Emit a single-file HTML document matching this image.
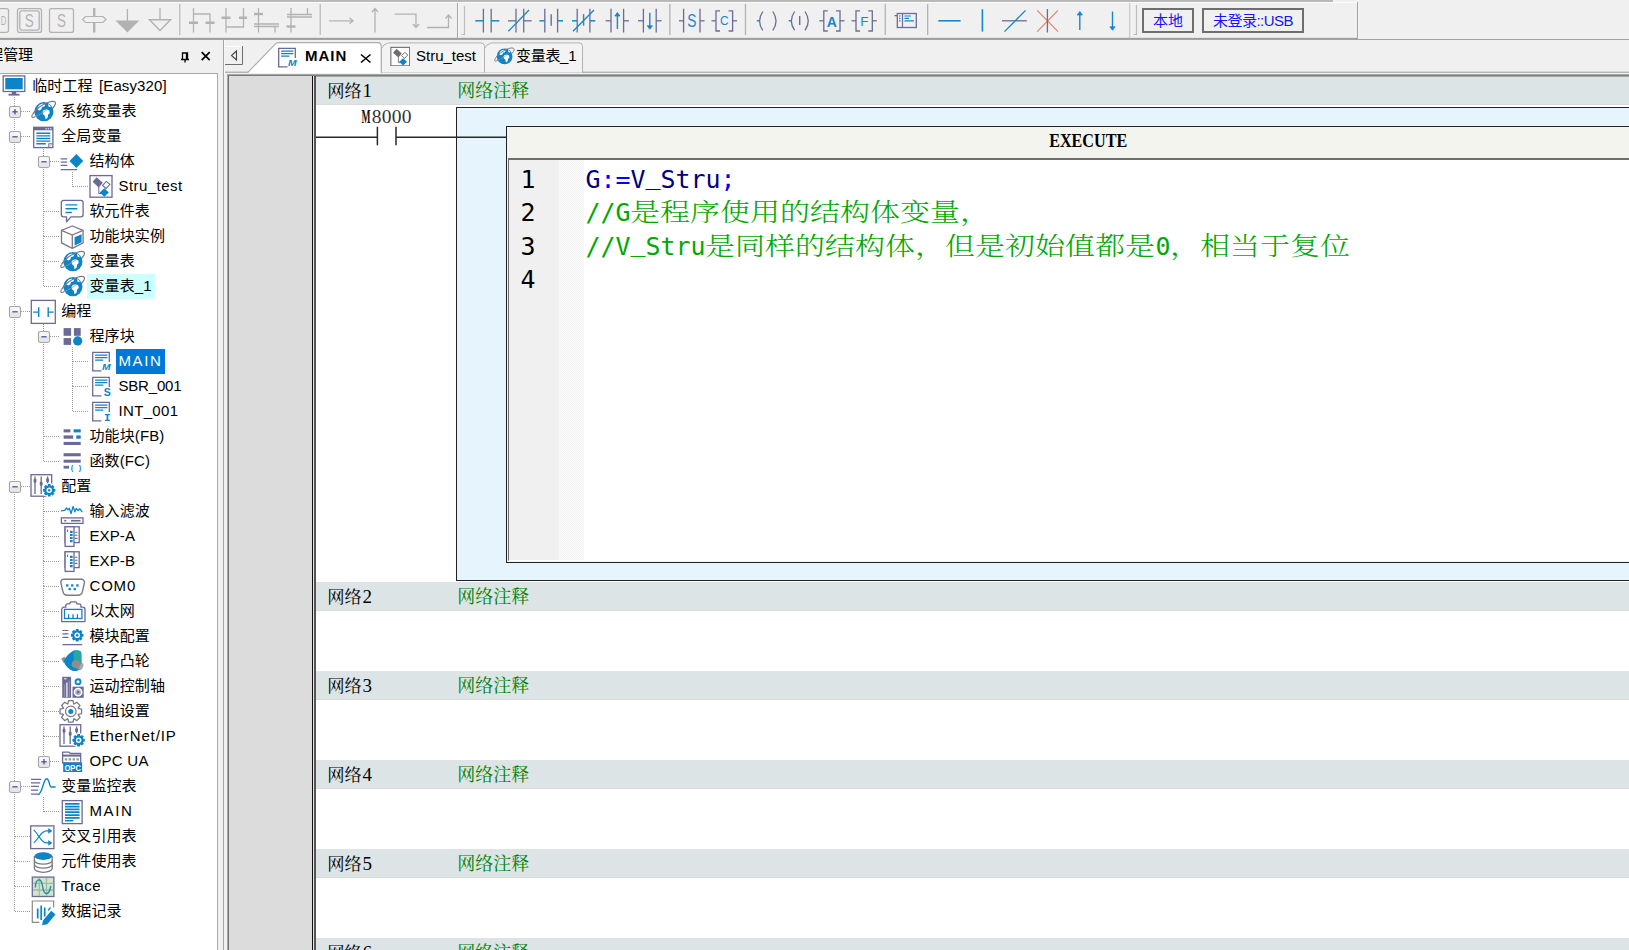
<!DOCTYPE html>
<html lang="zh-CN">
<head>
<meta charset="utf-8">
<title>MAIN</title>
<style>
html,body{margin:0;padding:0}
body{width:1629px;height:950px;position:relative;overflow:hidden;background:#f0f0f0;font-family:"Liberation Sans","Noto Sans CJK SC",sans-serif;font-size:15px;color:#000}
.abs{position:absolute}
/* toolbar */
#tb{position:absolute;left:0;top:0;width:1629px;height:40px;background:#f0f0f0}
.btn{position:absolute;top:8px;height:21px;border:2px solid #6e6e6e;box-sizing:content-box;color:#1414ff;font-size:15px;line-height:21px;text-align:center;background:#f0f0f0}
/* side */
#side{position:absolute;left:0;top:40px;width:223px;height:910px;background:#f0f0f0}
#tree{position:absolute;left:0;top:74px;width:217px;height:876px;background:#fff;border-right:1px solid #a9a9a9}
.ti{position:absolute;height:25px;line-height:24px;padding:0 3px 0 2.500px;white-space:nowrap;font-size:15px;letter-spacing:0.100px}
.ti.hot{background:#ccffff}
.ti.sel{background:#0078d7;color:#fff}
/* editor */
#ed{position:absolute;left:228px;top:75px;width:1401px;height:875px;background:#fff}
.nh{position:absolute;left:316px;width:1313px;height:29px;background:#dce4e5;border-bottom:1px solid #dadbd5;box-sizing:border-box}
.nl{position:absolute;left:327.300px;font:17.330px/29px "Noto Serif CJK SC",serif;color:#000;white-space:nowrap}
.nl{margin-top:-1px}
.nc{margin-top:-0.800px}
.nl b{font:19px/29px "Liberation Serif",serif;margin-left:0.500px}
.nc{position:absolute;left:457.300px;font:18px/29px "Noto Serif CJK SC",serif;color:#008000;white-space:nowrap}
.code{position:absolute;left:585.500px;height:34px;white-space:pre;font:24.900px/34px "DejaVu Sans Mono","Liberation Mono",monospace}
.cj{display:inline-block;font-family:"Noto Serif CJK SC",serif;font-weight:300;font-size:25px;line-height:20px;transform:scaleX(1.2);transform-origin:0 50%;vertical-align:baseline}
.us{position:relative;top:-3.800px}
.ln{position:absolute;left:520.500px;font:24.900px/34px "DejaVu Sans Mono","Liberation Mono",monospace;color:#000}
</style>
</head>
<body>
<!-- ================= TOOLBAR ================= -->
<div id="tb">
<svg class="abs" style="left:0;top:0" width="1629" height="40" viewBox="0 0 1629 40"><rect x="0" y="0" width="1333" height="2" fill="#b9b9b9"/><rect x="0" y="2" width="1358" height="1" fill="#fbfbfb"/><rect x="0" y="38" width="1358" height="1" fill="#9e9e9e"/><rect x="0" y="39" width="1629" height="1" fill="#a4a4a4"/><rect x="0" y="37" width="1357" height="1" fill="#e2e2e2"/><g fill="none" stroke="#b2b2b2" stroke-width="1.3"><path d="M-3 8.600H6.500a2 2 0 0 1 2 2V30.400a2 2 0 0 1-2 2H-3"/><rect x="17.500" y="8.600" width="24" height="23.800" rx="2"/><rect x="19.800" y="10.900" width="19.400" height="19.200" rx="2"/><rect x="49.500" y="8.600" width="24" height="23.800" rx="2"/></g><text x="0.800" y="25.300" textLength="5.600" lengthAdjust="spacingAndGlyphs" style="font:13.500px 'Liberation Sans',sans-serif;fill:#b2b2b2">D</text><text x="24.800" y="26.600" textLength="9" lengthAdjust="spacingAndGlyphs" style="font:18.500px 'Liberation Sans',sans-serif;fill:#b2b2b2">S</text><text x="57" y="27.300" textLength="9" lengthAdjust="spacingAndGlyphs" style="font:18.500px 'Liberation Sans',sans-serif;fill:#b2b2b2">S</text><path d="M94.200 8v24.500" stroke="#b2b2b2" stroke-width="2.400"/><path d="M82.500 19.500l3-3h17.500l3 3-3 3h-17.500z" fill="#f0f0f0" stroke="#b2b2b2" stroke-width="1.200"/><path d="M127.400 9v12" stroke="#b2b2b2" stroke-width="1.300"/><path d="M115.500 20.500h23.800l-11.900 12z" fill="#b2b2b2"/><path d="M160 8v12" stroke="#b2b2b2" stroke-width="1.300"/><path d="M149.500 19.800h21l-10.500 10.700z" fill="none" stroke="#b2b2b2" stroke-width="1.500"/><rect x="179" y="4" width="1.500" height="31" fill="#c2c2c2"/><g fill="none" stroke="#b2b2b2" stroke-width="1.300"><path d="M193.500 8v24.500M193.500 14h16.500v18.500"/><path d="M226 8v24.500M243.500 8v19H226"/><path d="M258.500 8v24.500M254 24h25M254 26.500h25M275 26.500v6"/><path d="M291 8v24.500M287 14.500h25M287 17h25M307.500 8v6.500"/></g><g fill="none" stroke="#b2b2b2" stroke-width="2.400"><path d="M189 22.800h9M205.500 22.800h9"/><path d="M221.500 17.700h9M239 17.700h8"/><path d="M254 14h9"/><path d="M286.500 26.500h9"/></g><rect x="319.500" y="4" width="1.500" height="31" fill="#c2c2c2"/><g fill="none" stroke="#b2b2b2" stroke-width="1.300"><path d="M329 20.800h24M349.500 17.800l3.500 3-3.500 3"/><path d="M375 32.500v-24M372 12l3-3.500 3 3.500"/><path d="M394.500 14.200h21.500v13M413 24l3 3.500 3-3.500"/><path d="M427 27.500h21.500v-12.500M445.500 18.500l3-3.500 3 3.500"/></g><rect x="457" y="3" width="1" height="35" fill="#a6a6a6"/><rect x="458" y="3" width="1" height="35" fill="#fafafa"/><path d="M464.500 6v28.500h-3" fill="none" stroke="#bdbdbd" stroke-width="1.200"/><path d="M483.4 8.8V32.4M491.2 8.8V32.4" stroke="#6c6c96" stroke-width="1.300" fill="none"/><path d="M475.3 20.8H483.4" stroke="#1488cc" stroke-width="1.5" fill="none"/><path d="M491.2 20.8H499.3" stroke="#1488cc" stroke-width="1.5" fill="none"/><path d="M516 8.8V32.4M523.7 8.8V32.4" stroke="#6c6c96" stroke-width="1.300" fill="none"/><path d="M508 20.8H516" stroke="#6c6c96" stroke-width="1.3" fill="none"/><path d="M523.7 20.8H531.7" stroke="#6c6c96" stroke-width="1.3" fill="none"/><path d="M508.300 31.300L529 10" stroke="#1488cc" stroke-width="1.300"/><path d="M544.8 8.8V32.4M557.6 8.8V32.4" stroke="#6c6c96" stroke-width="1.300" fill="none"/><path d="M539.4 20.8H544.8" stroke="#1488cc" stroke-width="1.5" fill="none"/><path d="M557.6 20.8H563" stroke="#1488cc" stroke-width="1.5" fill="none"/><path d="M551.200 14.200V25.700" stroke="#6c6c96" stroke-width="1.400"/><path d="M577.2 8.8V32.4M589.9 8.8V32.4" stroke="#6c6c96" stroke-width="1.300" fill="none"/><path d="M572 20.8H577.2" stroke="#1488cc" stroke-width="1.5" fill="none"/><path d="M589.9 20.8H595.3" stroke="#1488cc" stroke-width="1.5" fill="none"/><path d="M583.600 14.200V25.700" stroke="#6c6c96" stroke-width="1.400"/><path d="M573 31.300L594 10" stroke="#1488cc" stroke-width="1.300"/><path d="M611 8.8V32.4M623.6 8.8V32.4" stroke="#6c6c96" stroke-width="1.300" fill="none"/><path d="M605.6 20.8H611" stroke="#6c6c96" stroke-width="1.3" fill="none"/><path d="M623.6 20.8H629" stroke="#6c6c96" stroke-width="1.3" fill="none"/><path d="M617.400 29V13.500" stroke="#1488cc" stroke-width="1.400"/><path d="M614.800 16l2.600-3.500 2.600 3.500z" fill="#1488cc" stroke="#1488cc" stroke-width="0.800"/><path d="M643.4 8.8V32.4M656.2 8.8V32.4" stroke="#6c6c96" stroke-width="1.300" fill="none"/><path d="M638 20.8H643.4" stroke="#6c6c96" stroke-width="1.3" fill="none"/><path d="M656.2 20.8H661.6" stroke="#6c6c96" stroke-width="1.3" fill="none"/><path d="M649.800 12.800V28" stroke="#1488cc" stroke-width="1.400"/><path d="M647.200 25.800l2.600 3.500 2.600-3.500z" fill="#1488cc" stroke="#1488cc" stroke-width="0.800"/><rect x="669.200" y="4" width="1.300" height="31" fill="#b4b4b4"/><path d="M683.6 8.8V32.4M700 8.8V32.4" stroke="#6c6c96" stroke-width="1.300" fill="none"/><path d="M679 20.8H683.6" stroke="#6c6c96" stroke-width="1.3" fill="none"/><path d="M700 20.8H704.6" stroke="#6c6c96" stroke-width="1.3" fill="none"/><text x="687.300" y="27.200" textLength="9.200" lengthAdjust="spacingAndGlyphs" style="font:18.500px 'Liberation Sans',sans-serif;fill:#1488cc">S</text><path d="M720 10.800H716V31H720M728.6 10.800H732.6V31H728.6" fill="none" stroke="#6c6c96" stroke-width="1.300"/><path d="M711.5 20.8H716" stroke="#6c6c96" stroke-width="1.3" fill="none"/><path d="M732.6 20.8H737.1" stroke="#6c6c96" stroke-width="1.3" fill="none"/><text x="720" y="25.300" textLength="8.600" lengthAdjust="spacingAndGlyphs" style="font:12.500px 'Liberation Sans',sans-serif;fill:#1488cc">C</text><rect x="744.800" y="4" width="1.300" height="31" fill="#b4b4b4"/><path d="M762.8 11.500Q756.3 21 762.8 30.400M772.8 11.500Q779.3 21 772.8 30.400" fill="none" stroke="#6c6c96" stroke-width="1.300"/><path d="M756.8 20.8H759.8" stroke="#1488cc" stroke-width="1.4" fill="none"/><path d="M794.6 11.500Q788.1 21 794.6 30.400M805 11.500Q811.5 21 805 30.400" fill="none" stroke="#6c6c96" stroke-width="1.300"/><path d="M788.6 20.8H791.6" stroke="#1488cc" stroke-width="1.4" fill="none"/><path d="M799.700 16V25" stroke="#6c6c96" stroke-width="1.400"/><path d="M827.8 10.800H823.8V31H827.8M836 10.800H840V31H836" fill="none" stroke="#6c6c96" stroke-width="1.300"/><path d="M819.3 20.8H823.8" stroke="#6c6c96" stroke-width="1.3" fill="none"/><path d="M840 20.8H844.5" stroke="#6c6c96" stroke-width="1.3" fill="none"/><text x="831.900" y="26.500" text-anchor="middle" style="font:bold 14px 'Liberation Sans',sans-serif;fill:#1488cc">A</text><path d="M860 10.800H856V31H860M868.3 10.800H872.3V31H868.3" fill="none" stroke="#6c6c96" stroke-width="1.300"/><path d="M851.5 20.8H856" stroke="#6c6c96" stroke-width="1.3" fill="none"/><path d="M872.3 20.8H876.8" stroke="#6c6c96" stroke-width="1.3" fill="none"/><text x="864.300" y="26.300" text-anchor="middle" style="font:13.500px 'Liberation Sans',sans-serif;fill:#1488cc">F</text><rect x="884.600" y="4" width="1.300" height="31" fill="#b4b4b4"/><rect x="897.300" y="13.500" width="19" height="14" fill="none" stroke="#6c6c96" stroke-width="1.300"/><path d="M902.500 13.500v14M894.500 15.600h3" stroke="#6c6c96" stroke-width="1.200"/><path d="M904.500 16h6.500M904.500 18.300h4.500M904.500 20.800h9.500M899 16h1.500M899 18.300h1.500M899 20.800h1.500" stroke="#1488cc" stroke-width="1.200"/><rect x="927" y="4" width="1.300" height="31" fill="#b4b4b4"/><path d="M938.3 20.8H960.6" stroke="#1488cc" stroke-width="1.6" fill="none"/><path d="M982.400 9.300V31.600" stroke="#1488cc" stroke-width="1.600"/><path d="M1002 20.8H1026.8" stroke="#6c6c96" stroke-width="1.3" fill="none"/><path d="M1004.500 31.600L1025.600 10.400" stroke="#1488cc" stroke-width="1.300"/><path d="M1037.200 10.400L1058 31.600M1058 10.400L1037.200 31.600" stroke="#e0846a" stroke-width="1.200"/><path d="M1047.400 9V32.500" stroke="#6c6c96" stroke-width="1.300"/><path d="M1079.800 30V12.500" stroke="#1488cc" stroke-width="1.400"/><path d="M1077.200 15l2.600-3.500 2.600 3.500z" fill="#1488cc" stroke="#1488cc" stroke-width="0.800"/><path d="M1112.500 11.500V29" stroke="#1488cc" stroke-width="1.400"/><path d="M1109.900 26.800l2.600 3.500 2.600-3.500z" fill="#1488cc" stroke="#1488cc" stroke-width="0.800"/><rect x="1129.500" y="3" width="1" height="35" fill="#a6a6a6"/><rect x="1130.500" y="3" width="1" height="35" fill="#fafafa"/><path d="M1136.500 5v29.500h-3" fill="none" stroke="#bdbdbd" stroke-width="1.200"/><rect x="1357" y="2" width="1" height="37" fill="#a2a2a2"/><rect x="1358" y="2" width="1" height="36" fill="#f6f6f6"/></svg>
<div class="btn" style="left:1142px;width:48px">本地</div>
<div class="btn" style="left:1202px;width:98px;letter-spacing:-0.550px">未登录::USB</div>
</div>
<!-- ================= SIDE PANEL ================= -->
<div id="side"></div>
<div class="abs" style="left:223px;top:40px;width:1px;height:910px;background:#a6a6a6"></div>
<div class="abs" style="left:-11.700px;top:45.400px;font-size:15px;line-height:20px;white-space:nowrap;letter-spacing:-0.150px">程管理</div>
<svg class="abs" style="left:177px;top:48.500px" width="36" height="16" viewBox="0 0 36 16"><path d="M4 10.500h8M5.500 10v-6h5v6M9.500 4v6M8 10.500v3" stroke="#000" stroke-width="1.300" fill="none"/><path d="M24.700 3.200l8 8M32.700 3.200l-8 8" stroke="#000" stroke-width="1.700" fill="none"/></svg>
<div class="abs" style="left:0;top:73px;width:218px;height:1px;background:#a8a8a8"></div>
<div id="tree"></div>
<svg style="position:absolute;left:0;top:0" width="218" height="950"><path d="M21 111.5H31M14.5 97V107M21 136.5H31M14.5 117V132M50 161.5H60M43.5 147V157M73 186.5H89M72.5 172V187M44 211.5H60M43.5 167V212M44 236.5H60M43.5 211V237M44 261.5H60M43.5 236V262M44 286.5H60M43.5 261V287M21 311.5H31M14.5 142V307M50 336.5H60M43.5 322V332M73 361.5H89M72.5 347V362M73 386.5H89M72.5 361V387M73 411.5H89M72.5 386V412M44 436.5H60M43.5 342V437M44 461.5H60M43.5 436V462M21 486.5H31M14.5 317V482M44 511.5H60M43.5 497V512M44 536.5H60M43.5 511V537M44 561.5H60M43.5 536V562M44 586.5H60M43.5 561V587M44 611.5H60M43.5 586V612M44 636.5H60M43.5 611V637M44 661.5H60M43.5 636V662M44 686.5H60M43.5 661V687M44 711.5H60M43.5 686V712M44 736.5H60M43.5 711V737M50 761.5H60M43.5 736V757M21 786.5H31M14.5 492V782M44 811.5H60M43.5 797V812M15 836.5H31M14.5 792V837M15 861.5H31M14.5 836V862M15 886.5H31M14.5 861V887M15 911.5H31M14.5 886V912" stroke="#9a9a9a" stroke-width="1" stroke-dasharray="1 1" fill="none"/></svg>
<svg style="position:absolute;left:2.2px;top:74px;overflow:visible" width="24" height="24" viewBox="0 0 24 24"><rect x="1.200" y="1.900" width="21.600" height="15.600" fill="#fff" stroke="#6a6a94" stroke-width="1.300"/><rect x="3.300" y="4" width="17.400" height="11.300" fill="#0b84c8"/><rect x="9.800" y="18" width="4.400" height="2.200" fill="#6a6a94"/><rect x="6.500" y="19.800" width="11" height="1.800" fill="#6a6a94"/></svg>
<div class="ti" style="left:29.70px;top:74px">临时工程<span style="letter-spacing:0.100px;margin-left:2.200px"> [Easy320]</span></div>
<svg style="position:absolute;left:8.8px;top:106px;overflow:visible" width="12" height="12" viewBox="0 0 12 12"><rect x="0.500" y="0.500" width="11" height="10.800" rx="1.800" fill="#f6f6f6" stroke="#a6a6a6" stroke-width="1.200"/><rect x="1.300" y="6" width="9.400" height="4.500" fill="#e6e6e6"/><path d="M3.300 5.800h5.400" stroke="#3c4a9c" stroke-width="1.200"/><path d="M6 3.100v5.400" stroke="#3c4a9c" stroke-width="1.200"/></svg>
<svg style="position:absolute;left:31px;top:99px;overflow:visible" width="24" height="24" viewBox="0 0 24 24"><path d="M4.500 17.500C1 19.300 -0.200 18.200 1.500 15.500" fill="none" stroke="#7a7a86" stroke-width="1.200"/><circle cx="12.900" cy="12.700" r="9.600" fill="#0b84c8"/><path d="M6.500 8.500l2-2.800 3.200-1.200 2.500 1.200-.8 1.800-2.400.5-.6 2.200-2.200 1.200-1.500-.6zM12.500 11.200l3-.9 2.800 1.300.5 2.300-1.600 1.600-.6 3.200-2 1.500-.8-3.400-1.800-1.600-.4-2.400zM17 5l2.200 1.200.6 2-2.300-.8z" fill="#fff"/><path d="M1.500 15.500C4 11 10.500 5.500 17.500 3.200C22.500 1.600 25.500 2.400 24.200 5.600C23.400 7.600 21.500 9.500 21.500 9.500" fill="none" stroke="#7a7a86" stroke-width="1.200"/><path d="M4.500 17.500C8.500 15.800 13 13 17 10" fill="none" stroke="#9a9aa6" stroke-width="1" opacity="0.800"/></svg>
<div class="ti" style="left:58.7px;top:99px">系统变量表</div>
<svg style="position:absolute;left:8.8px;top:131px;overflow:visible" width="12" height="12" viewBox="0 0 12 12"><rect x="0.500" y="0.500" width="11" height="10.800" rx="1.800" fill="#f6f6f6" stroke="#a6a6a6" stroke-width="1.200"/><rect x="1.300" y="6" width="9.400" height="4.500" fill="#e6e6e6"/><path d="M3.300 5.800h5.400" stroke="#3c4a9c" stroke-width="1.200"/></svg>
<svg style="position:absolute;left:31px;top:124px;overflow:visible" width="24" height="24" viewBox="0 0 24 24"><rect x="2.700" y="3.300" width="19.200" height="20.300" fill="#fff" stroke="#6a6a94" stroke-width="1.300"/><rect x="2.700" y="3.300" width="19.200" height="3" fill="#6a6a94"/><path d="M14.500 4.800h1.300M16.800 4.800h1.300M19.100 4.800h1.300" stroke="#fff" stroke-width="1"/><path d="M5.300 9.300h14M5.300 11.900h14M5.300 14.500h14M5.300 17.100h14M5.300 19.700h9.500" stroke="#0b84c8" stroke-width="1.400"/><path d="M17.300 23.600v-4.300h4.600z" fill="#6a6a94"/><path d="M18.300 22.300v-2h2.200z" fill="#fff"/></svg>
<div class="ti" style="left:58.7px;top:124px">全局变量</div>
<svg style="position:absolute;left:37.8px;top:156px;overflow:visible" width="12" height="12" viewBox="0 0 12 12"><rect x="0.500" y="0.500" width="11" height="10.800" rx="1.800" fill="#f6f6f6" stroke="#a6a6a6" stroke-width="1.200"/><rect x="1.300" y="6" width="9.400" height="4.500" fill="#e6e6e6"/><path d="M3.300 5.800h5.400" stroke="#3c4a9c" stroke-width="1.200"/></svg>
<svg style="position:absolute;left:59.5px;top:149px;overflow:visible" width="24" height="24" viewBox="0 0 24 24"><path d="M0.700 9.900h6.600M0.700 13.100h6.600M0.700 16.300h6.600M0.700 20.600h16.400" stroke="#6a6a94" stroke-width="1.300"/><path d="M16.400 5.100l6.900 6.900-6.900 6.900-6.900-6.900z" fill="#0b84c8"/></svg>
<div class="ti" style="left:87px;top:149px">结构体</div>
<svg style="position:absolute;left:88.5px;top:174px;overflow:visible" width="24" height="24" viewBox="0 0 24 24"><rect x="1" y="1.600" width="22" height="21.600" fill="#fff" stroke="#6a6a94" stroke-width="1.300"/><path d="M7.600 3.200l6.200 5.600-4 4.600-6.200-5.600z" fill="#6a6a94"/><path d="M17.300 7.400l3.600 3-3.800 4-3.600-3z" fill="#fff" stroke="#6a6a94" stroke-width="1.100"/><path d="M9.800 13v6.500h2.500" fill="none" stroke="#6a6a94" stroke-width="1"/><path d="M15.300 14.300l4.600 4.200-4.600 4.200-4.600-4.200z" fill="#0b84c8"/></svg>
<div class="ti" style="left:116px;top:174px"><span style="letter-spacing:0.45px">Stru_test</span></div>
<svg style="position:absolute;left:59.5px;top:199px;overflow:visible" width="24" height="24" viewBox="0 0 24 24"><path d="M3.600 1.300h17.200a2.300 2.300 0 0 1 2.300 2.300v12a2.300 2.300 0 0 1-2.300 2.300h-9.800l-4.500 4.800v-4.800h-2.900a2.300 2.300 0 0 1-2.300-2.300v-12a2.300 2.300 0 0 1 2.300-2.300z" fill="#fff" stroke="#6a6a94" stroke-width="1.300" stroke-linejoin="round"/><path d="M5.500 5.900h11.800M5.500 9.700h11.800M5.500 13.500h6.300" stroke="#0b84c8" stroke-width="1.400"/></svg>
<div class="ti" style="left:87px;top:199px">软元件表</div>
<svg style="position:absolute;left:59.5px;top:224px;overflow:visible" width="24" height="24" viewBox="0 0 24 24"><path d="M12.300 2l10.800 4.300v12.600l-10.800 5.400-10.800-5.400v-12.600z" fill="#fff" stroke="#7a7a86" stroke-width="1.300" stroke-linejoin="round"/><path d="M1.500 6.300l10.800 4.800 10.800-4.800M12.300 11.100v13" fill="none" stroke="#7a7a86" stroke-width="1.300"/><path d="M14.600 13.200l7-3v8l-7 3.300z" fill="#0b84c8"/></svg>
<div class="ti" style="left:87px;top:224px">功能块实例</div>
<svg style="position:absolute;left:59.5px;top:249px;overflow:visible" width="24" height="24" viewBox="0 0 24 24"><path d="M4.500 17.500C1 19.300 -0.200 18.200 1.500 15.500" fill="none" stroke="#7a7a86" stroke-width="1.200"/><circle cx="12.900" cy="12.700" r="9.600" fill="#0b84c8"/><path d="M6.500 8.500l2-2.800 3.200-1.200 2.500 1.200-.8 1.800-2.400.5-.6 2.200-2.200 1.200-1.500-.6zM12.500 11.200l3-.9 2.800 1.300.5 2.300-1.600 1.600-.6 3.200-2 1.500-.8-3.400-1.800-1.600-.4-2.400zM17 5l2.200 1.200.6 2-2.300-.8z" fill="#fff"/><path d="M1.500 15.500C4 11 10.500 5.500 17.500 3.200C22.500 1.600 25.500 2.400 24.200 5.600C23.400 7.600 21.500 9.500 21.500 9.500" fill="none" stroke="#7a7a86" stroke-width="1.200"/><path d="M4.500 17.500C8.500 15.800 13 13 17 10" fill="none" stroke="#9a9aa6" stroke-width="1" opacity="0.800"/></svg>
<div class="ti" style="left:87px;top:249px">变量表</div>
<svg style="position:absolute;left:59.5px;top:274px;overflow:visible" width="24" height="24" viewBox="0 0 24 24"><path d="M4.500 17.500C1 19.300 -0.200 18.200 1.500 15.500" fill="none" stroke="#7a7a86" stroke-width="1.200"/><circle cx="12.900" cy="12.700" r="9.600" fill="#0b84c8"/><path d="M6.500 8.500l2-2.800 3.200-1.200 2.500 1.200-.8 1.800-2.400.5-.6 2.200-2.200 1.200-1.500-.6zM12.500 11.200l3-.9 2.800 1.300.5 2.300-1.600 1.600-.6 3.200-2 1.500-.8-3.400-1.800-1.600-.4-2.400zM17 5l2.200 1.200.6 2-2.300-.8z" fill="#fff"/><path d="M1.500 15.500C4 11 10.500 5.500 17.500 3.200C22.500 1.600 25.500 2.400 24.200 5.600C23.400 7.600 21.500 9.500 21.500 9.500" fill="none" stroke="#7a7a86" stroke-width="1.200"/><path d="M4.500 17.500C8.500 15.800 13 13 17 10" fill="none" stroke="#9a9aa6" stroke-width="1" opacity="0.800"/></svg>
<div class="ti hot" style="left:87px;top:274px">变量表_1</div>
<svg style="position:absolute;left:8.8px;top:306px;overflow:visible" width="12" height="12" viewBox="0 0 12 12"><rect x="0.500" y="0.500" width="11" height="10.800" rx="1.800" fill="#f6f6f6" stroke="#a6a6a6" stroke-width="1.200"/><rect x="1.300" y="6" width="9.400" height="4.500" fill="#e6e6e6"/><path d="M3.300 5.800h5.400" stroke="#3c4a9c" stroke-width="1.200"/></svg>
<svg style="position:absolute;left:31px;top:299px;overflow:visible" width="24" height="24" viewBox="0 0 24 24"><rect x="0.300" y="1.400" width="24" height="23" fill="#fff" stroke="#6a6a94" stroke-width="1.300"/><path d="M2.200 13.100h5.500M17.200 13.100h5.500M7.700 8.300v9.700M17.200 8.300v9.700" stroke="#0b84c8" stroke-width="1.400" fill="none"/></svg>
<div class="ti" style="left:58.7px;top:299px">编程</div>
<svg style="position:absolute;left:37.8px;top:331px;overflow:visible" width="12" height="12" viewBox="0 0 12 12"><rect x="0.500" y="0.500" width="11" height="10.800" rx="1.800" fill="#f6f6f6" stroke="#a6a6a6" stroke-width="1.200"/><rect x="1.300" y="6" width="9.400" height="4.500" fill="#e6e6e6"/><path d="M3.300 5.800h5.400" stroke="#3c4a9c" stroke-width="1.200"/></svg>
<svg style="position:absolute;left:59.5px;top:324px;overflow:visible" width="24" height="24" viewBox="0 0 24 24"><rect x="3.600" y="4.100" width="7.500" height="7.700" fill="#6a6a94"/><rect x="13.900" y="4.100" width="6.800" height="7.700" fill="#6a6a94"/><rect x="3.600" y="14.100" width="7.500" height="6.800" fill="#6a6a94"/><circle cx="17.700" cy="16.900" r="4.600" fill="#0b84c8"/></svg>
<div class="ti" style="left:87px;top:324px">程序块</div>
<svg style="position:absolute;left:88.5px;top:349px;overflow:visible" width="24" height="24" viewBox="0 0 24 24"><path d="M20.300 13v-9.700h-16.600v18.500h8.800" fill="#fff" stroke="#6a6a94" stroke-width="1.300"/><path d="M6.100 6.200h12.300M6.100 8.700h12.300M6.100 11.100h8.200" stroke="#0b84c8" stroke-width="1.300"/><text x="13" y="21.400" textLength="8.600" lengthAdjust="spacingAndGlyphs" style="font:italic bold 9.500px 'Liberation Sans',sans-serif;fill:#0b84c8">M</text></svg>
<div class="ti sel" style="left:116px;top:349px"><span style="letter-spacing:1.6px">MAIN</span></div>
<svg style="position:absolute;left:88.5px;top:374px;overflow:visible" width="24" height="24" viewBox="0 0 24 24"><path d="M20.300 13v-9.700h-16.600v18.500h8.800" fill="#fff" stroke="#6a6a94" stroke-width="1.300"/><path d="M6.100 6.200h12.300M6.100 8.700h12.300M6.100 11.100h8.200" stroke="#0b84c8" stroke-width="1.300"/><text x="14.800" y="21.800" style="font:bold 10.500px 'Liberation Sans',sans-serif;fill:#0b84c8">S</text></svg>
<div class="ti" style="left:116px;top:374px"><span style="letter-spacing:-0.2px">SBR_001</span></div>
<svg style="position:absolute;left:88.5px;top:399px;overflow:visible" width="24" height="24" viewBox="0 0 24 24"><path d="M20.300 13v-9.700h-16.600v18.500h8.800" fill="#fff" stroke="#6a6a94" stroke-width="1.300"/><path d="M6.100 6.200h12.300M6.100 8.700h12.300M6.100 11.100h8.200" stroke="#0b84c8" stroke-width="1.300"/><text x="15" y="21.800" style="font:bold 11px 'Liberation Mono',monospace;fill:#0b84c8">I</text></svg>
<div class="ti" style="left:116px;top:399px"><span style="letter-spacing:0.33px">INT_001</span></div>
<svg style="position:absolute;left:59.5px;top:424px;overflow:visible" width="24" height="24" viewBox="0 0 24 24"><rect x="3.600" y="5.300" width="6.800" height="3.100" fill="#6a6a94"/><rect x="13.600" y="5.300" width="7.100" height="3.100" fill="#0b84c8"/><rect x="3.600" y="11.400" width="9.600" height="3.300" fill="#6a6a94"/><rect x="16.300" y="11.400" width="4.400" height="3.300" fill="#0b84c8"/><rect x="3.600" y="17.900" width="17.100" height="3.100" fill="#6a6a94"/></svg>
<div class="ti" style="left:87px;top:424px">功能块(FB)</div>
<svg style="position:absolute;left:59.5px;top:449px;overflow:visible" width="24" height="24" viewBox="0 0 24 24"><rect x="3.600" y="4.200" width="17.100" height="3.100" fill="#6a6a94"/><rect x="3.600" y="10.700" width="17.100" height="3" fill="#6a6a94"/><rect x="3.600" y="16.800" width="5.500" height="2.800" fill="#6a6a94"/><text x="10.800" y="21" textLength="10.400" lengthAdjust="spacing" style="font:bold 7.500px 'Liberation Sans',sans-serif;fill:#0b84c8">( )</text></svg>
<div class="ti" style="left:87px;top:449px">函数(FC)</div>
<svg style="position:absolute;left:8.8px;top:481px;overflow:visible" width="12" height="12" viewBox="0 0 12 12"><rect x="0.500" y="0.500" width="11" height="10.800" rx="1.800" fill="#f6f6f6" stroke="#a6a6a6" stroke-width="1.200"/><rect x="1.300" y="6" width="9.400" height="4.500" fill="#e6e6e6"/><path d="M3.300 5.800h5.400" stroke="#3c4a9c" stroke-width="1.200"/></svg>
<svg style="position:absolute;left:31px;top:474px;overflow:visible" width="24" height="24" viewBox="0 0 24 24"><rect x="0" y="0.700" width="20.700" height="21.500" fill="#fff" stroke="#6a6a94" stroke-width="1.300"/><path d="M4 2.500v17.500M10.200 2.500v17.500M16.600 2.500v9" stroke="#6a6a94" stroke-width="1.300"/><rect x="2.600" y="4.800" width="2.800" height="4" rx="1" fill="#6a6a94"/><rect x="8.800" y="7.800" width="2.800" height="4" rx="1" fill="#6a6a94"/><rect x="15.200" y="4.300" width="2.800" height="4" rx="1" fill="#6a6a94"/><circle cx="18.2" cy="16.2" r="7.200" fill="#fff"/><path d="M22.48 14.52L24.38 14.97L24.38 17.43L22.48 17.88L22.41 18.04L23.44 19.70L21.70 21.44L20.04 20.41L19.88 20.48L19.43 22.38L16.97 22.38L16.52 20.48L16.36 20.41L14.70 21.44L12.96 19.70L13.99 18.04L13.92 17.88L12.02 17.43L12.02 14.97L13.92 14.52L13.99 14.36L12.96 12.70L14.70 10.96L16.36 11.99L16.52 11.92L16.97 10.02L19.43 10.02L19.88 11.92L20.04 11.99L21.70 10.96L23.44 12.70L22.41 14.36z" fill="#0b84c8"/><circle cx="18.2" cy="16.2" r="2.700" fill="#fff"/><circle cx="18.2" cy="16.2" r="1.200" fill="#0b84c8"/></svg>
<div class="ti" style="left:58.7px;top:474px">配置</div>
<svg style="position:absolute;left:59.5px;top:499px;overflow:visible" width="24" height="24" viewBox="0 0 24 24"><path d="M0.900 11.800l3.800-.5 1.800-2.300 1.500 1.800 1.300-1.300 1.800 5 2-7 1.800 5.300 1.500-3.500 1.800 2.200 1.700-1.700 2.400 3.300" fill="none" stroke="#0b84c8" stroke-width="1.300" stroke-linejoin="round"/><rect x="1.400" y="18.900" width="21.600" height="5.500" fill="#fff" stroke="#6a6a94" stroke-width="1.300"/><rect x="4.300" y="20.900" width="2" height="1.600" fill="#6a6a94"/><rect x="11" y="20.900" width="9.500" height="1.600" fill="#6a6a94"/></svg>
<div class="ti" style="left:87px;top:499px">输入滤波</div>
<svg style="position:absolute;left:59.5px;top:524px;overflow:visible" width="24" height="24" viewBox="0 0 24 24"><rect x="5.100" y="2.800" width="14.100" height="15.800" fill="#fff" stroke="#6a6a94" stroke-width="1.300"/><rect x="5.100" y="2.800" width="8.900" height="19.600" fill="#fff" stroke="#6a6a94" stroke-width="1.300"/><path d="M11.300 6.800v12" stroke="#0b84c8" stroke-width="2.700" stroke-dasharray="2.100 1"/><path d="M14.700 8.300h2.800M14.700 11.300h2.800M14.700 14.400h2.800" stroke="#6a6a94" stroke-width="1.100"/><path d="M7.500 5.500v2.500" stroke="#6a6a94" stroke-width="1"/></svg>
<div class="ti" style="left:87px;top:524px">EXP-A</div>
<svg style="position:absolute;left:59.5px;top:549px;overflow:visible" width="24" height="24" viewBox="0 0 24 24"><rect x="5.100" y="2.800" width="14.100" height="15.800" fill="#fff" stroke="#6a6a94" stroke-width="1.300"/><rect x="5.100" y="2.800" width="8.900" height="19.600" fill="#fff" stroke="#6a6a94" stroke-width="1.300"/><path d="M11.300 6.800v12" stroke="#0b84c8" stroke-width="2.700" stroke-dasharray="2.100 1"/><path d="M14.700 8.300h2.800M14.700 11.300h2.800M14.700 14.400h2.800" stroke="#6a6a94" stroke-width="1.100"/><path d="M7.500 5.500v2.500" stroke="#6a6a94" stroke-width="1"/></svg>
<div class="ti" style="left:87px;top:549px">EXP-B</div>
<svg style="position:absolute;left:59.5px;top:574px;overflow:visible" width="24" height="24" viewBox="0 0 24 24"><path d="M3.800 5.200h17.700a3 3 0 0 1 2.900 3.700l-2 8.800a4.500 4.500 0 0 1-4.400 3.600h-10.700a4.500 4.500 0 0 1-4.400-3.600l-2-8.800a3 3 0 0 1 2.900-3.700z" fill="#fff" stroke="#7a7a86" stroke-width="1.400"/><g fill="#0b84c8"><rect x="6.100" y="10.300" width="2.300" height="2.300"/><rect x="11.100" y="10.300" width="2.300" height="2.300"/><rect x="16.300" y="10.300" width="2.300" height="2.300"/><rect x="8.500" y="13.900" width="2.300" height="2.300"/><rect x="13.600" y="13.900" width="2.300" height="2.300"/></g></svg>
<div class="ti" style="left:87px;top:574px"><span style="letter-spacing:0.8px">COM0</span></div>
<svg style="position:absolute;left:59.5px;top:599px;overflow:visible" width="24" height="24" viewBox="0 0 24 24"><path d="M1.700 22.600v-12.200a2.200 2.200 0 0 1 2.200-2.200h1.900v-1.700a1.700 1.700 0 0 1 1.700-1.700h2.400v-0.600a1.400 1.400 0 0 1 1.400-1.400h4.100a1.400 1.400 0 0 1 1.400 1.400v0.600h2.400a1.700 1.700 0 0 1 1.700 1.700v1.700h1.900a2.200 2.200 0 0 1 2.200 2.200v12.200z" fill="#fff" stroke="#6a6a94" stroke-width="1.300" stroke-linejoin="round"/><rect x="4.500" y="10.400" width="17.400" height="9.100" fill="#fff" stroke="#0b84c8" stroke-width="1.300"/><path d="M8.600 19.500v-4.300M13 19.500v-4.300M17.400 19.500v-4.300" stroke="#0b84c8" stroke-width="1.300"/></svg>
<div class="ti" style="left:87px;top:599px">以太网</div>
<svg style="position:absolute;left:59.5px;top:624px;overflow:visible" width="24" height="24" viewBox="0 0 24 24"><path d="M2.400 6.500h6.100M2.400 9.900h6.100M2.400 13.300h6.100M2.400 20.600h19.800" stroke="#6a6a94" stroke-width="1.200"/><path d="M21.58 9.59L23.48 10.05L23.48 12.55L21.58 13.01L21.51 13.18L22.52 14.86L20.76 16.62L19.08 15.61L18.91 15.68L18.45 17.58L15.95 17.58L15.49 15.68L15.32 15.61L13.64 16.62L11.88 14.86L12.89 13.18L12.82 13.01L10.92 12.55L10.92 10.05L12.82 9.59L12.89 9.42L11.88 7.74L13.64 5.98L15.32 6.99L15.49 6.92L15.95 5.02L18.45 5.02L18.91 6.92L19.08 6.99L20.76 5.98L22.52 7.74L21.51 9.42z" fill="#0b84c8"/><circle cx="17.200" cy="11.300" r="2.800" fill="#fff"/><circle cx="17.200" cy="11.300" r="1.300" fill="#0b84c8"/></svg>
<div class="ti" style="left:87px;top:624px">模块配置</div>
<svg style="position:absolute;left:59.5px;top:649px;overflow:visible" width="24" height="24" viewBox="0 0 24 24"><path d="M1.200 9.500l3.300-1.800 2.400 4.400-3.300 1.800z" fill="#8e8e8e"/><path d="M14.500 1.500C17.500 1 20.500 2 21.300 3.500L21.500 17C21 20.500 17.500 22.600 13.500 22C9.500 21.400 4.200 15.500 4 12.500C3.800 9.500 10.500 2.300 14.500 1.500z" fill="#0b84c8"/><path d="M14.500 1.500C17.500 1 20.500 2 21.300 3.500L21.500 15C19.500 12.500 17 12 14.800 12.800C13 9 13.200 4.500 14.500 1.500z" fill="#2aa7a4"/><rect x="11.500" y="12" width="11" height="7.600" rx="3.500" transform="rotate(22 17 15.800)" fill="#8e8e8e"/><ellipse cx="21.300" cy="17.700" rx="1.800" ry="3.600" transform="rotate(22 21.300 17.700)" fill="#a8a8a8"/></svg>
<div class="ti" style="left:87px;top:649px">电子凸轮</div>
<svg style="position:absolute;left:59.5px;top:674px;overflow:visible" width="24" height="24" viewBox="0 0 24 24"><rect x="2.200" y="2.800" width="8.900" height="21" fill="#6a6a94"/><path d="M6.900 8.500v14.800" stroke="#fff" stroke-width="1.200"/><path d="M4.300 10.500v12.800M9.300 6.500v16.800" stroke="#9a9ab8" stroke-width="0.900"/><path d="M4 4.800h2.500" stroke="#fff" stroke-width="1"/><rect x="12.500" y="12.700" width="11.200" height="11.100" fill="#6a6a94"/><circle cx="18.100" cy="18.200" r="3.700" fill="#b9b9c4" stroke="#fff" stroke-width="1.400"/><circle cx="18.100" cy="18.200" r="1.400" fill="#6a6a94"/><circle cx="18" cy="7.800" r="2.500" fill="#fff" stroke="#0b84c8" stroke-width="1.900"/></svg>
<div class="ti" style="left:87px;top:674px">运动控制轴</div>
<svg style="position:absolute;left:59.5px;top:699px;overflow:visible" width="24" height="24" viewBox="0 0 24 24"><path d="M18.25 9.48L21.57 10.17L21.57 14.63L18.25 15.32L18.13 15.61L19.99 18.44L16.84 21.59L14.01 19.73L13.72 19.85L13.03 23.17L8.57 23.17L7.88 19.85L7.59 19.73L4.76 21.59L1.61 18.44L3.47 15.61L3.35 15.32L0.03 14.63L0.03 10.17L3.35 9.48L3.47 9.19L1.61 6.36L4.76 3.21L7.59 5.07L7.88 4.95L8.57 1.63L13.03 1.63L13.72 4.95L14.01 5.07L16.84 3.21L19.99 6.36L18.13 9.19z" fill="#fff" stroke="#7a7a86" stroke-width="1.300" stroke-linejoin="round"/><circle cx="10.800" cy="12.400" r="5.300" fill="#fff" stroke="#7a7a86" stroke-width="1.200"/><circle cx="10.800" cy="12.400" r="2.500" fill="#0b84c8"/></svg>
<div class="ti" style="left:87px;top:699px">轴组设置</div>
<svg style="position:absolute;left:59.5px;top:724px;overflow:visible" width="24" height="24" viewBox="0 0 24 24"><rect x="0" y="0.700" width="20.700" height="21.500" fill="#fff" stroke="#6a6a94" stroke-width="1.300"/><path d="M4 2.500v17.500M10.200 2.500v17.500M16.600 2.500v9" stroke="#6a6a94" stroke-width="1.300"/><rect x="2.600" y="4.800" width="2.800" height="4" rx="1" fill="#6a6a94"/><rect x="8.800" y="7.800" width="2.800" height="4" rx="1" fill="#6a6a94"/><rect x="15.200" y="4.300" width="2.800" height="4" rx="1" fill="#6a6a94"/><circle cx="18.6" cy="16.2" r="7.200" fill="#fff"/><path d="M22.88 14.52L24.78 14.97L24.78 17.43L22.88 17.88L22.81 18.04L23.84 19.70L22.10 21.44L20.44 20.41L20.28 20.48L19.83 22.38L17.37 22.38L16.92 20.48L16.76 20.41L15.10 21.44L13.36 19.70L14.39 18.04L14.32 17.88L12.42 17.43L12.42 14.97L14.32 14.52L14.39 14.36L13.36 12.70L15.10 10.96L16.76 11.99L16.92 11.92L17.37 10.02L19.83 10.02L20.28 11.92L20.44 11.99L22.10 10.96L23.84 12.70L22.81 14.36z" fill="#0b84c8"/><circle cx="18.6" cy="16.2" r="2.700" fill="#fff"/><circle cx="18.6" cy="16.2" r="1.200" fill="#0b84c8"/></svg>
<div class="ti" style="left:87px;top:724px"><span style="letter-spacing:0.87px">EtherNet/IP</span></div>
<svg style="position:absolute;left:37.8px;top:756px;overflow:visible" width="12" height="12" viewBox="0 0 12 12"><rect x="0.500" y="0.500" width="11" height="10.800" rx="1.800" fill="#f6f6f6" stroke="#a6a6a6" stroke-width="1.200"/><rect x="1.300" y="6" width="9.400" height="4.500" fill="#e6e6e6"/><path d="M3.300 5.800h5.400" stroke="#3c4a9c" stroke-width="1.200"/><path d="M6 3.100v5.400" stroke="#3c4a9c" stroke-width="1.200"/></svg>
<svg style="position:absolute;left:59.5px;top:749px;overflow:visible" width="24" height="24" viewBox="0 0 24 24"><path d="M2.600 14v-10.900h6.500l1.200 1.400h10.400v9.500z" fill="#fff" stroke="#6a6a94" stroke-width="1.300" stroke-linejoin="round"/><rect x="2.600" y="5.600" width="18.100" height="2" fill="#6a6a94"/><path d="M4.800 10.300h2.400M8.700 10.300h2.400M12.600 10.300h2.400M16.500 10.300h2.400" stroke="#8aa08a" stroke-width="2.200"/><rect x="3.200" y="13.600" width="18.900" height="9.400" fill="#0b84c8"/><text x="12.650" y="21.600" text-anchor="middle" textLength="16.500" lengthAdjust="spacingAndGlyphs" style="font:bold 9.500px 'Liberation Sans',sans-serif;fill:#fff">OPC</text></svg>
<div class="ti" style="left:87px;top:749px"><span style="letter-spacing:0.3px">OPC UA</span></div>
<svg style="position:absolute;left:8.8px;top:781px;overflow:visible" width="12" height="12" viewBox="0 0 12 12"><rect x="0.500" y="0.500" width="11" height="10.800" rx="1.800" fill="#f6f6f6" stroke="#a6a6a6" stroke-width="1.200"/><rect x="1.300" y="6" width="9.400" height="4.500" fill="#e6e6e6"/><path d="M3.300 5.800h5.400" stroke="#3c4a9c" stroke-width="1.200"/></svg>
<svg style="position:absolute;left:31px;top:774px;overflow:visible" width="24" height="24" viewBox="0 0 24 24"><path d="M0 5.400h10.200M0 8.900h9.200M0 12.400h8M0 16.100h7M0 20.200h7" stroke="#6a6a94" stroke-width="1.200"/><path d="M6.800 20.600C11.500 20.600 12.300 4.700 15.500 4.700S18 13 20.300 13H24.600" fill="none" stroke="#0b84c8" stroke-width="1.400"/></svg>
<div class="ti" style="left:58.7px;top:774px">变量监控表</div>
<svg style="position:absolute;left:59.5px;top:799px;overflow:visible" width="24" height="24" viewBox="0 0 24 24"><rect x="2.300" y="1.600" width="19.800" height="23" fill="#fff" stroke="#6a6a94" stroke-width="1.300"/><path d="M5 4.900h14.600M5 7.600h14.600M5 10.400h14.600M5 13.200h14.600M5 16.100h14.600M5 18.900h14.600" stroke="#0b84c8" stroke-width="1.700"/><path d="M5 21.700h8.200" stroke="#0b84c8" stroke-width="1.500"/></svg>
<div class="ti" style="left:87px;top:799px"><span style="letter-spacing:1.6px">MAIN</span></div>
<svg style="position:absolute;left:31px;top:824px;overflow:visible" width="24" height="24" viewBox="0 0 24 24"><rect x="-0.300" y="1.900" width="23.200" height="22.700" fill="#fff" stroke="#6a6a94" stroke-width="1.300"/><path d="M2.700 5.900C8 10.500 10 18.900 15.500 18.900H19M2.700 18.900C8 14.500 10 6.900 15.500 6.900H19" fill="none" stroke="#0b84c8" stroke-width="1.200"/><path d="M17.300 4l4 2.900-4 2.900zM17.300 16l4 2.900-4 2.900z" fill="#0b84c8"/></svg>
<div class="ti" style="left:58.7px;top:824px">交叉引用表</div>
<svg style="position:absolute;left:31px;top:849px;overflow:visible" width="24" height="24" viewBox="0 0 24 24"><path d="M3.400 7.100v12.400c0 2.100 4 3.800 8.900 3.800s8.900-1.700 8.900-3.800v-12.400" fill="#fff" stroke="#7a7a86" stroke-width="1.300"/><path d="M3.400 11.400c0 2.100 4 3.700 8.900 3.700s8.900-1.600 8.900-3.700M3.400 15.500c0 2.100 4 3.700 8.900 3.700s8.900-1.600 8.900-3.700" fill="none" stroke="#7a7a86" stroke-width="1.300"/><ellipse cx="12.300" cy="7.100" rx="8.900" ry="3.800" fill="#0b84c8"/></svg>
<div class="ti" style="left:58.7px;top:849px">元件使用表</div>
<svg style="position:absolute;left:31px;top:874px;overflow:visible" width="24" height="24" viewBox="0 0 24 24"><rect x="1.300" y="3.100" width="21.600" height="19.400" fill="#cfe6cc" stroke="#6a6a94" stroke-width="1.300"/><path d="M8.300 4v18M15.500 4v18M2 9.400h20M2 16h20" stroke="#a9b6ac" stroke-width="1.300"/><path d="M4.300 13.500C4.800 3.500 10.300 3.500 11.600 12.500S18 22.500 19.800 12" fill="none" stroke="#2596a8" stroke-width="1.500"/></svg>
<div class="ti" style="left:58.7px;top:874px"><span style="letter-spacing:0.4px">Trace</span></div>
<svg style="position:absolute;left:31px;top:899px;overflow:visible" width="24" height="24" viewBox="0 0 24 24"><path d="M22.700 8.500v-6.500h-21.400v21.400h7" fill="#fff" stroke="#8a8a8a" stroke-width="1.200"/><path d="M6.700 9.500v10M10.200 6.500v14.500M13.700 8.500v9" stroke="#0b84c8" stroke-width="1.700"/><path d="M12 21.500l8.200-9.700 4.300 3.700-8.200 9.700-5.300 1z" fill="#0b84c8"/><path d="M17 11.500l2.500-3" stroke="#0b84c8" stroke-width="1.200"/></svg>
<div class="ti" style="left:58.7px;top:899px">数据记录</div>
<!-- ================= TABS ================= -->
<div id="tabs">
<svg class="abs" style="left:224px;top:39px" width="1405" height="36" viewBox="224 39 1405 36">
<rect x="224" y="40" width="1" height="35" fill="#fafafa"/>
<path d="M225 72.500H248" stroke="#b4b4b4" stroke-width="1"/><path d="M225 71.500H249" stroke="#d4d4d4" stroke-width="1"/>
<path d="M381 72.500H1629" stroke="#b4b4b4" stroke-width="1"/><path d="M381 71.500H1629" stroke="#d4d4d4" stroke-width="1"/>
<rect x="224.500" y="46.500" width="18" height="18" fill="#f0f0f0" stroke="none"/>
<path d="M225 46.500H242" stroke="#fdfdfd" stroke-width="1"/><path d="M225 64.500H242.500V46" stroke="#6e6e6e" stroke-width="1" fill="none"/>
<path d="M236.500 51l-5 4.500 5 4.500z" fill="none" stroke="#444" stroke-width="1.100"/>
<path d="M381.5 72.500V48.500Q383.0 44 388.5 42.900H481.0Q484.5 42.900 484.5 46.500V72.500" fill="#f3f3f3" stroke="#b2b2b2" stroke-width="1"/>
<path d="M484.5 72.500V48.500Q486.0 44 491.5 42.900H579.0Q582.5 42.900 582.5 46.500V72.500" fill="#f3f3f3" stroke="#b2b2b2" stroke-width="1"/>
<path d="M247.500 73L276 43.400Q276.800 42.600 278 42.600H377.500Q381.200 42.600 381.200 46.300V73z" fill="#fff"/>
<path d="M247.500 72.800L276 43.400Q276.800 42.600 278 42.600H377.500Q381.200 42.600 381.200 46.300V72.800" fill="none" stroke="#adadad" stroke-width="1.100"/>
<path d="M361 54.500l9.500 8M370.500 54.500l-9.500 8" stroke="#000" stroke-width="1.600" fill="none"/>
</svg>
<svg class="abs" style="left:275px;top:44.500px" width="24" height="24" viewBox="0 0 24 24"><path d="M20.300 13v-9.700h-16.600v18.500h8.800" fill="#fff" stroke="#6a6a94" stroke-width="1.300"/><path d="M6.100 6.200h12.300M6.100 8.700h12.300M6.100 11.100h8.200" stroke="#0b84c8" stroke-width="1.300"/><text x="13" y="21.400" textLength="8.600" lengthAdjust="spacingAndGlyphs" style="font:italic bold 9.500px 'Liberation Sans',sans-serif;fill:#0b84c8">M</text></svg>
<svg class="abs" style="left:389.500px;top:45.800px" width="20.500" height="20.500" viewBox="0 0 24 24"><rect x="1" y="1.600" width="22" height="21.600" fill="#fff" stroke="#6e6e6e" stroke-width="1.300"/><path d="M7.600 3.200l6.200 5.600-4 4.600-6.200-5.600z" fill="#6e6e6e"/><path d="M17.300 7.400l3.600 3-3.800 4-3.600-3z" fill="#fff" stroke="#6e6e6e" stroke-width="1.100"/><path d="M9.800 13v6.500h2.500" fill="none" stroke="#6e6e6e" stroke-width="1"/><path d="M15.300 14.300l4.600 4.200-4.600 4.200-4.600-4.200z" fill="#0b84c8"/></svg>
<svg class="abs" style="left:494.200px;top:45.500px;overflow:visible" width="19.700" height="19.700" viewBox="0 0 24 24"><path d="M4.500 17.500C1 19.300 -0.200 18.200 1.500 15.500" fill="none" stroke="#7a7a86" stroke-width="1.200"/><circle cx="12.900" cy="12.700" r="9.600" fill="#0b84c8"/><path d="M6.500 8.500l2-2.800 3.200-1.200 2.500 1.200-.8 1.800-2.400.5-.6 2.200-2.200 1.200-1.500-.6zM12.500 11.200l3-.9 2.800 1.300.5 2.300-1.600 1.600-.6 3.200-2 1.500-.8-3.400-1.800-1.600-.4-2.400zM17 5l2.200 1.200.6 2-2.300-.8z" fill="#fff"/><path d="M1.500 15.500C4 11 10.500 5.500 17.500 3.200C22.500 1.600 25.500 2.400 24.200 5.600C23.400 7.600 21.500 9.500 21.500 9.500" fill="none" stroke="#7a7a86" stroke-width="1.200"/><path d="M4.500 17.500C8.500 15.800 13 13 17 10" fill="none" stroke="#9a9aa6" stroke-width="1" opacity="0.800"/></svg>
<div class="abs" style="left:305px;top:45px;font:bold 15px/22px 'Liberation Sans',sans-serif;letter-spacing:1px">MAIN</div>
<div class="abs" style="left:416px;top:45px;font-size:15px;line-height:22px;white-space:nowrap">Stru_test</div>
<div class="abs" style="left:516px;top:45px;font-size:15px;line-height:22px;white-space:nowrap;letter-spacing:-0.300px">变量表_1</div>
</div>
<!-- ================= EDITOR ================= -->
<div class="abs" style="left:227px;top:74px;width:1402px;height:876px;border-left:1px solid #a8a8a8;border-top:1px solid #a8a8a8;box-sizing:border-box"></div>
<div class="abs" style="left:228px;top:75px;width:1401px;height:875px;border-left:1px solid #6e6e6e;border-top:1px solid #7c7c7c;box-sizing:border-box;background:#fff"></div>
<div class="abs" style="left:229px;top:76px;width:83px;height:874px;background:#dcdcdc"></div>
<div class="abs" style="left:312px;top:76px;width:1px;height:874px;background:#111"></div>
<div class="abs" style="left:313px;top:76px;width:1px;height:874px;background:#e8e8e8"></div>
<div class="abs" style="left:314px;top:76px;width:2px;height:874px;background:#555"></div>
<div class="nh" style="top:76px"></div>
<div class="nl" style="top:76px">网络<b>1</b></div>
<div class="nc" style="top:76px">网络注释</div>
<div class="nh" style="top:582px"></div>
<div class="nl" style="top:582px">网络<b>2</b></div>
<div class="nc" style="top:582px">网络注释</div>
<div class="nh" style="top:671px"></div>
<div class="nl" style="top:671px">网络<b>3</b></div>
<div class="nc" style="top:671px">网络注释</div>
<div class="nh" style="top:760px"></div>
<div class="nl" style="top:760px">网络<b>4</b></div>
<div class="nc" style="top:760px">网络注释</div>
<div class="nh" style="top:849px"></div>
<div class="nl" style="top:849px">网络<b>5</b></div>
<div class="nc" style="top:849px">网络注释</div>
<div class="nh" style="top:938px"></div>
<div class="nl" style="top:938px">网络<b>6</b></div>
<div class="nc" style="top:938px">网络注释</div>
<div class="abs" style="left:316px;top:76px;width:1313px;height:1px;background:#a6a6a6"></div>
<svg class="abs" style="left:355px;top:104px" width="64" height="24" viewBox="0 0 64 24"><text x="6.500" y="18.800" textLength="9" lengthAdjust="spacingAndGlyphs" style="font:bold 19px 'Liberation Serif',serif;fill:#111">M</text><text x="16.800" y="18.800" style="font:19.500px 'Liberation Serif',serif;fill:#333;letter-spacing:0.250px">8000</text></svg>
<div class="abs" style="left:456px;top:107px;width:1180px;height:474px;box-sizing:border-box;border:1px solid #222;background:#e6f4fd"></div>
<div class="abs" style="left:506px;top:126px;width:1130px;height:437px;box-sizing:border-box;border:1px solid #222;background:#f4f4ee"></div>
<svg class="abs" style="left:316px;top:120px" width="200" height="30" viewBox="316 120 200 30"><path d="M316 137.200H377.400M396 137.200H506M377.400 126.800V145.200M396 126.800V145.200" stroke="#2a2a2a" stroke-width="1.500" fill="none"/></svg>
<svg class="abs" style="left:1040px;top:128px" width="100" height="26" viewBox="0 0 100 26"><text x="9.200" y="18.600" textLength="78" lengthAdjust="spacingAndGlyphs" style="font:bold 19px 'Liberation Serif',serif;fill:#000">EXECUTE</text></svg>
<div class="abs" style="left:508px;top:158px;width:1128px;height:403px;box-sizing:border-box;border-left:1px solid #6e6e6e;border-top:2px solid #6e6e6e;border-bottom:1px solid #fff;background:#fff"></div>
<div class="abs" style="left:509px;top:160px;width:50px;height:400px;background:#f0f0f0"></div>
<div class="abs" style="left:559px;top:160px;width:25px;height:400px;background-color:#f8f8f8;background-image:conic-gradient(#f2f2f2 25%,#fdfdfd 0 50%,#f2f2f2 0 75%,#fdfdfd 0);background-size:2px 2px"></div>
<div class="ln" style="top:162.5px">1</div>
<div class="ln" style="top:196.1px">2</div>
<div class="ln" style="top:229.7px">3</div>
<div class="ln" style="top:263.3px">4</div>
<div class="code" style="top:162.5px"><span style="color:#000080">G</span><span style="color:#0000ff">:=</span><span style="color:#000080">V<span class="us">_</span>Stru</span><span style="color:#0000ff">;</span></div>
<div class="code" style="top:196.1px;color:#00a800">//G<span class="cj" style="margin-right:60.0px">是程序使用的结构体变量，</span></div>
<div class="code" style="top:229.7px;color:#00a800">//V<span class="us">_</span>Stru<span class="cj" style="margin-right:75.0px">是同样的结构体，但是初始值都是</span>0<span class="cj" style="margin-right:30.0px">，相当于复位</span></div>
</body>
</html>
